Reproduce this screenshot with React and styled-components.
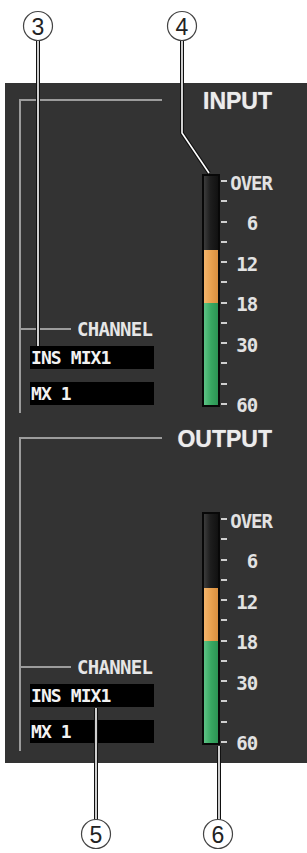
import React from "react";
import styled, { createGlobalStyle } from "styled-components";

const GlobalStyle = createGlobalStyle`
  html, body {
    margin: 0;
    padding: 0;
    background: #fff;
  }
  body {
    font-family: "Liberation Sans", Arial, sans-serif;
  }
`;

const Page = styled.div`
  position: relative;
  width: 307px;
  height: 853px;
  overflow: hidden;
  padding-top: 83px;
  box-sizing: border-box;
  background: #fff;
`;

const Panel = styled.div`
  margin-left: 5px;
  height: 680px;
  box-sizing: border-box;
  background: #333333;
  padding: 16px 0 0 14px;
  display: flex;
  flex-direction: column;
  gap: 24px;
`;

const Section = styled.section`
  display: flex;
  height: 314px;
`;

const Bracket = styled.div`
  width: 144px;
  box-sizing: border-box;
  border-top: 2px solid #9c9c9c;
  border-left: 2px solid #9c9c9c;
  display: flex;
  flex-direction: column;
  justify-content: flex-end;
  padding-bottom: 8px;
`;

const ChannelRow = styled.div`
  display: flex;
  align-items: center;
  gap: 6px;
  height: 16px;
  margin-bottom: 9px;
`;

const RowLine = styled.div`
  width: 50px;
  height: 2px;
  background: #9c9c9c;
`;

const ChannelText = styled.span`
  font-family: "DejaVu Sans Mono", monospace;
  font-weight: bold;
  font-size: 19px;
  letter-spacing: -0.7px;
  line-height: 16px;
  color: #e6e6e6;
`;

const NameBox = styled.div`
  margin-left: 9px;
  margin-top: ${(p) => p.$gap || 0}px;
  width: 124px;
  height: 23px;
  box-sizing: border-box;
  padding-left: 1px;
  background: #000;
  color: #f2f2f2;
  font-family: "DejaVu Sans Mono", monospace;
  font-weight: bold;
  font-size: 18px;
  letter-spacing: -0.9px;
  line-height: 23px;
  white-space: pre;
`;

const Right = styled.div`
  flex: 1;
  display: flex;
  flex-direction: column;
  padding-right: 35px;
`;

const Title = styled.h2`
  margin: -10px 0 0 0;
  align-self: flex-end;
  font-family: "Liberation Sans", Arial, sans-serif;
  font-weight: bold;
  font-size: 23px;
  line-height: 24px;
  color: #ececec;
  text-shadow: 0 0 1px rgba(255, 255, 255, 0.6);
`;

const MeterRow = styled.div`
  display: flex;
  margin-top: 61px;
  margin-left: 40px;
`;

const Meter = styled.div`
  width: 18px;
  height: 233px;
  box-sizing: border-box;
  border: 2px solid #080808;
  display: flex;
  flex-direction: column;
`;

const Segment = styled.div`
  flex: ${(p) => (p.$h ? `0 0 ${p.$h}px` : "1")};
  background: ${(p) => p.$bg};
`;

const Scale = styled.div`
  height: 233px;
  box-sizing: border-box;
  padding: 6px 0 2px 1px;
  display: flex;
  flex-direction: column;
  justify-content: space-between;
`;

const Tick = styled.div`
  display: flex;
  align-items: center;
  gap: 3px;
  height: 2px;
`;

const Dash = styled.div`
  width: 6px;
  height: 2px;
  background: #cfcfcf;
`;

const Label = styled.span`
  width: ${(p) => (p.$wide ? "auto" : "27px")};
  text-align: right;
  white-space: nowrap;
  margin-top: 3px;
  font-family: "DejaVu Sans Mono", monospace;
  font-weight: bold;
  font-size: 19px;
  letter-spacing: -1px;
  line-height: 16px;
  color: #e2e2e2;
`;

const Callouts = styled.svg`
  position: absolute;
  left: 0;
  top: 0;
  pointer-events: none;
`;

const ticks = ["OVER", "", "6", "", "12", "", "18", "", "30", "", "", "60"];

const LevelMeter = () => (
  <MeterRow>
    <Meter>
      <Segment $bg="linear-gradient(to right, #3c3c3c, #1e1e1e 45%, #111)" />
      <Segment $h={53} $bg="linear-gradient(to right, #f4b56c, #e9a14f 50%, #d98f40)" />
      <Segment $h={102} $bg="linear-gradient(to right, #5ec386, #38a862 50%, #2c9454)" />
    </Meter>
    <Scale>
      {ticks.map((t, i) => (
        <Tick key={i}>
          <Dash />
          {t && <Label $wide={t === "OVER"}>{t}</Label>}
        </Tick>
      ))}
    </Scale>
  </MeterRow>
);

const Group = ({ title }) => (
  <Section>
    <Bracket>
      <ChannelRow>
        <RowLine />
        <ChannelText>CHANNEL</ChannelText>
      </ChannelRow>
      <NameBox>INS MIX1</NameBox>
      <NameBox $gap={13}>MX 1</NameBox>
    </Bracket>
    <Right>
      <Title>{title}</Title>
      <LevelMeter />
    </Right>
  </Section>
);

const Leader = ({ points }) => (
  <>
    <polyline points={points} fill="none" stroke="#111" strokeWidth="4" />
    <polyline points={points} fill="none" stroke="#fff" strokeWidth="1.6" />
  </>
);

const Badge = ({ x, y, n }) => (
  <>
    <circle cx={x} cy={y} r="14.5" fill="#fff" stroke="#444" strokeWidth="1.2" />
    <text
      x={x}
      y={y + 8.5}
      textAnchor="middle"
      fontSize="23"
      fontFamily="Liberation Sans, Arial, sans-serif"
      fill="#222"
    >
      {n}
    </text>
  </>
);

export default function App() {
  return (
    <>
      <GlobalStyle />
      <Page>
        <Panel>
          <Group title="INPUT" />
          <Group title="OUTPUT" />
        </Panel>
        <Callouts width="307" height="853" viewBox="0 0 307 853">
          <Leader points="38,40 38,346" />
          <Leader points="182,41 182,133 209,173" />
          <Leader points="96,708 96,820" />
          <Leader points="219,746 219,820" />
          <Badge x={38} y={26} n="3" />
          <Badge x={182} y={26} n="4" />
          <Badge x={96} y={834} n="5" />
          <Badge x={218} y={834} n="6" />
        </Callouts>
      </Page>
    </>
  );
}
